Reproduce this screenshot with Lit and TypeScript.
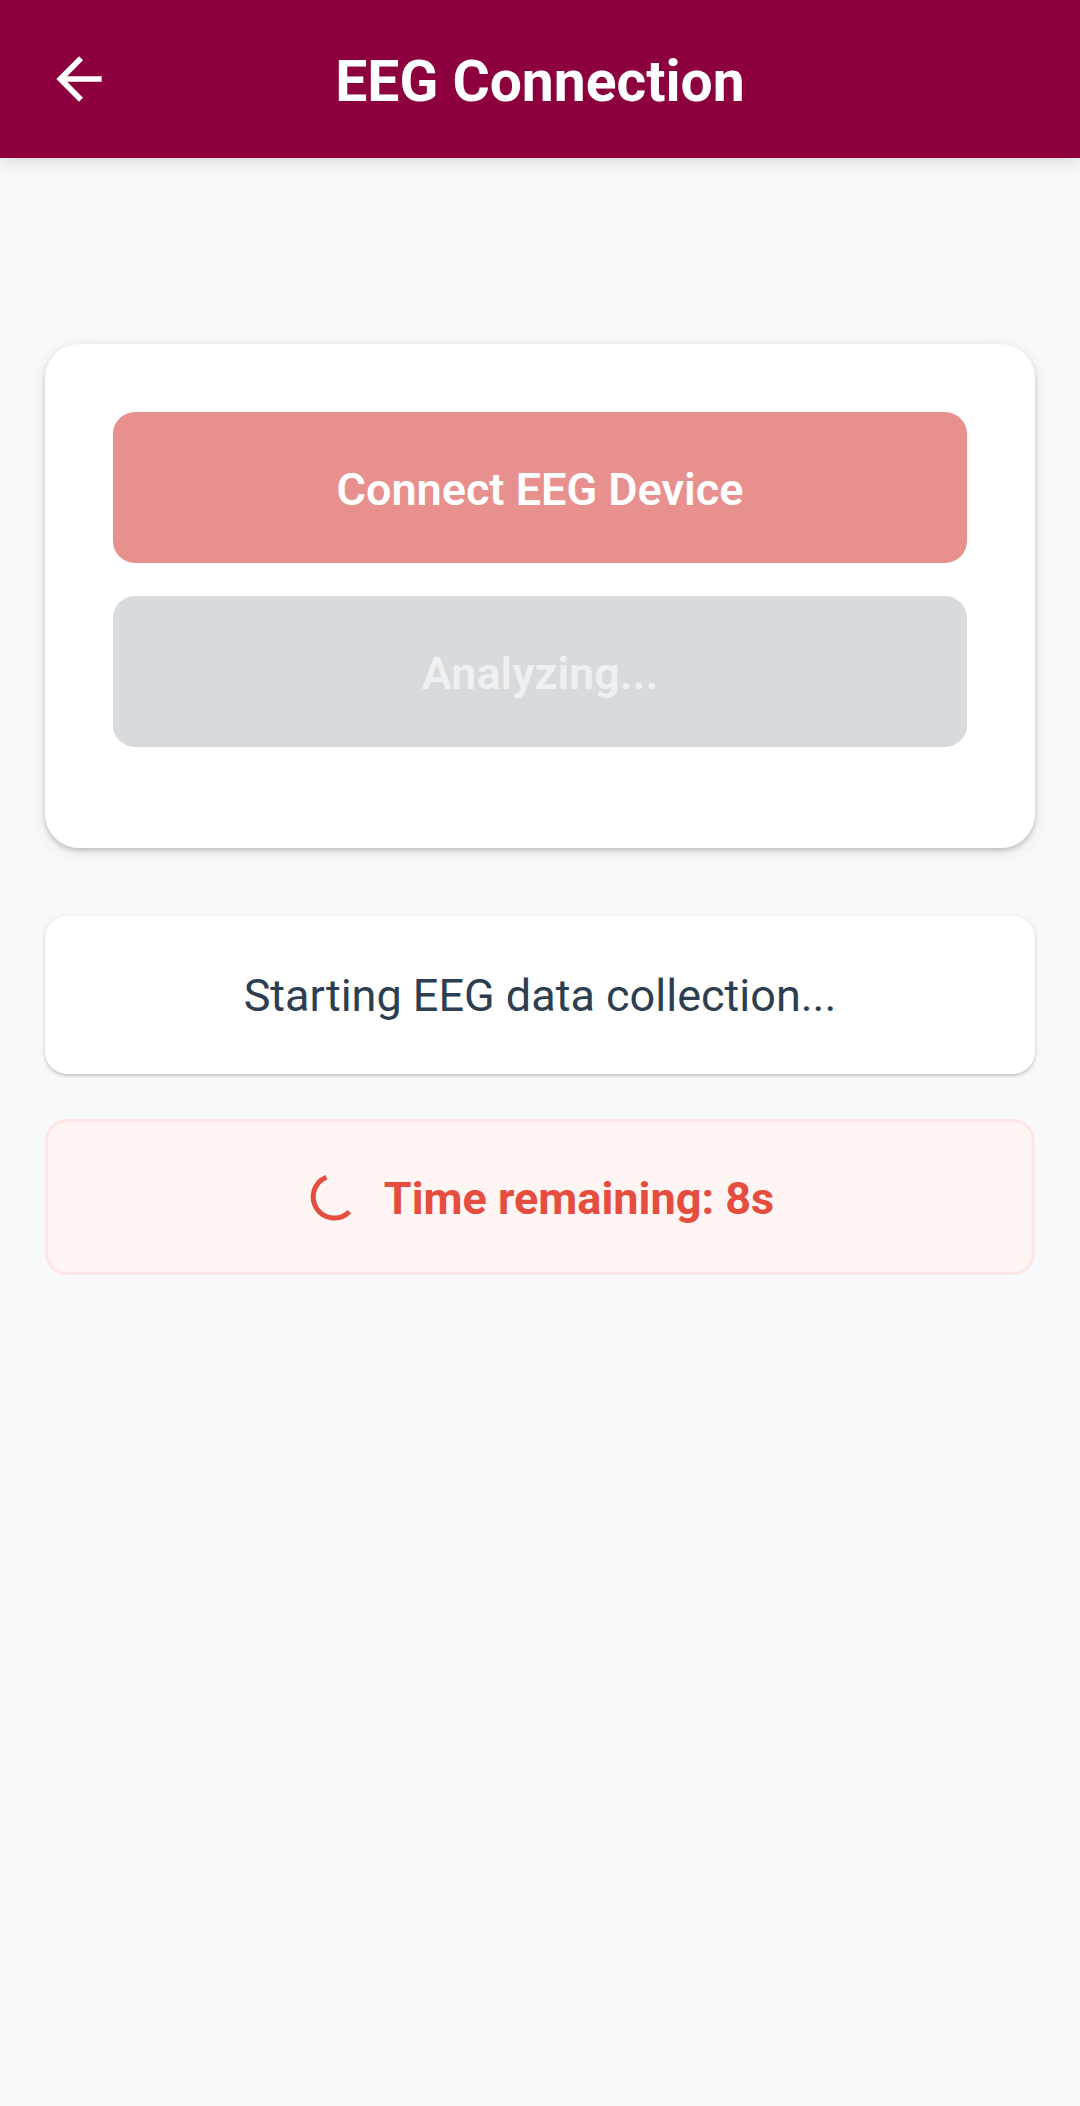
import { LitElement, html, css } from "lit";
import { customElement, property, state } from "lit/decorators.js";

@customElement("screen-header")
class ScreenHeader extends LitElement {
  @property() heading = "";

  static styles = css`
    :host {
      display: block;
      position: relative;
      z-index: 1;
    }
    .bar {
      display: grid;
      grid-template-columns: 68px 1fr 68px;
      align-items: center;
      min-height: 158px;
      box-sizing: border-box;
      padding: 0 45px;
      background: #8b003d;
      box-shadow: 0 4px 16px rgba(0, 0, 0, 0.13);
    }
    .back {
      display: block;
      width: 68px;
      height: 68px;
      padding: 0;
      border: 0;
      background: none;
      color: #fff;
      cursor: pointer;
    }
    .icon {
      display: block;
      width: 68px;
      height: 68px;
      fill: currentColor;
    }
    .title {
      margin: 0;
      padding-top: 6px;
      color: #fff;
      font-size: 57px;
      line-height: 66px;
      font-weight: 700;
      text-align: center;
    }
  `;

  render() {
    return html`
      <header class="bar">
        <button class="back" type="button" aria-label="Back">
          <svg class="icon" viewBox="0 0 24 24" aria-hidden="true">
            <path d="M20 11H7.83l5.59-5.59L12 4l-8 8 8 8 1.41-1.41L7.83 13H20v-2z" />
          </svg>
        </button>
        <h1 class="title">${this.heading}</h1>
      </header>
    `;
  }
}

@customElement("app-root")
class AppRoot extends LitElement {
  @state() private status = "Starting EEG data collection...";
  @state() private secondsLeft = 8;

  static styles = css`
    :host {
      display: block;
      min-height: 100vh;
      background: #f8f9fb;
      font-family: Roboto, "Liberation Sans", sans-serif;
      font-size: 45px;
      line-height: 54px;
    }
    .content {
      display: flex;
      flex-direction: column;
      padding: 186px 45px 45px;
    }
    .panel {
      display: flex;
      flex-direction: column;
      gap: 33px;
      padding: 68px 68px 101px;
      border-radius: 34px;
      background: #fff;
      box-shadow:
        0 3px 5px rgba(0, 0, 0, 0.16),
        0 3px 14px rgba(0, 0, 0, 0.1);
    }
    .action {
      min-height: 151px;
      padding: 5px 45px 0;
      border: 0;
      border-radius: 22px;
      font: inherit;
      font-weight: 600;
      text-align: center;
    }
    .connect {
      background: #e8908e;
      color: #fff;
    }
    .analyze {
      background: #d7dbde;
      color: #eff0f2;
    }
    .status {
      margin: 68px 0 0;
      padding: 53px 45px 51px;
      border-radius: 22px;
      background: #fff;
      box-shadow:
        0 2px 3px rgba(0, 0, 0, 0.16),
        0 1px 6px rgba(0, 0, 0, 0.08);
      color: #2c3e50;
      text-align: center;
    }
    .timer {
      display: flex;
      align-items: center;
      justify-content: center;
      gap: 22px;
      margin-top: 45px;
      padding: 46px 45px;
      border: 3px solid #fee5e6;
      border-radius: 22px;
      background: #fff5f4;
      color: #e54d3e;
      font-weight: 700;
    }
    .remaining {
      padding-top: 4px;
    }
    .spinner {
      flex: none;
      width: 56px;
      height: 56px;
      fill: none;
      stroke: currentColor;
      stroke-width: 5;
    }
  `;

  render() {
    return html`
      <screen-header heading="EEG Connection"></screen-header>
      <main class="content">
        <section class="panel">
          <button class="action connect" type="button" disabled>Connect EEG Device</button>
          <button class="action analyze" type="button" disabled>Analyzing...</button>
        </section>
        <p class="status" role="status">${this.status}</p>
        <div class="timer">
          <svg class="spinner" viewBox="0 0 56 56" aria-hidden="true">
            <path d="M20.4 8.2 A21.2 21.2 0 1 0 43.4 42.8" />
          </svg>
          <span class="remaining">Time remaining: ${this.secondsLeft}s</span>
        </div>
      </main>
    `;
  }
}
